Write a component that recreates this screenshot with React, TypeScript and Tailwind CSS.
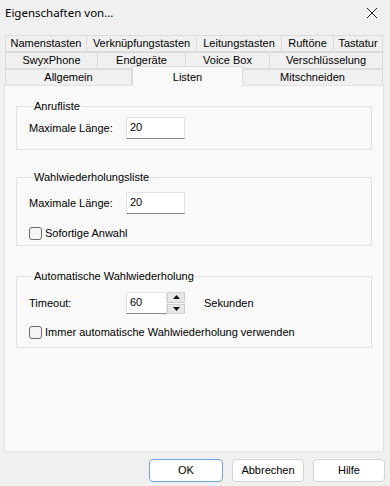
import React from "react";

const font = { fontFamily: '"Liberation Sans", Arial, sans-serif' };

function Tab({ label, w, selected }: { label: string; w: number; selected?: boolean }) {
  return (
    <div
      className={
        selected
          ? "relative z-10 -mt-[3px] flex h-[20px] items-start justify-center border border-b-0 border-[#dcdcdc] bg-[#f9f9f9] pt-[2px] text-[11px] text-black"
          : "flex h-[17px] items-center justify-center border border-[#dcdcdc] bg-[#f0f0f0] text-[11px] text-black -ml-px first:ml-0"
      }
      style={{ width: w }}
    >
      {label}
    </div>
  );
}

function TextBox({ value, w }: { value: string; w: number }) {
  return (
    <div
      className="h-[22px] border border-[#e3e3e3] border-b-[#8a8a8a] bg-white pl-[3px] pt-[3px] text-[11px] leading-[13px] text-black"
      style={{ width: w }}
    >
      {value}
    </div>
  );
}

function CheckBox({ label }: { label: string }) {
  return (
    <div className="flex items-center gap-[3px]">
      <div className="h-[13px] w-[13px] rounded-[3px] border border-[#6a6a6a] bg-[#f5f5f5]" />
      <span className="text-[11px] text-black">{label}</span>
    </div>
  );
}

function Group({ title, children, h }: { title: string; children: React.ReactNode; h: number }) {
  return (
    <fieldset
      className="relative mx-[11px] border border-[#e2e2e2] pl-[12px]"
      style={{ height: h }}
    >
      <legend className="ml-[4px] px-[1px] text-[11px] leading-[13px] text-black">{title}</legend>
      {children}
    </fieldset>
  );
}

function Button({ label, primary }: { label: string; primary?: boolean }) {
  return (
    <div
      className={
        "flex h-[23px] items-center justify-center rounded-[4px] border bg-white text-[11px] text-black " +
        (primary ? "border-[#6ea4d8]" : "border-[#d4d4d4]")
      }
      style={{ width: primary ? 74 : 72 }}
    >
      {label}
    </div>
  );
}

export default function App() {
  return (
    <div className="flex h-[486px] w-[390px] flex-col bg-[#f0f0f0]" style={font}>
      <div className="flex h-[25px] items-center justify-between pl-[5px] pr-[12px]">
        <span className="text-[11.5px] text-black" style={{ fontFamily: '"Noto Sans", "Open Sans", sans-serif' }}>
          Eigenschaften von...
        </span>
        <svg width="12" height="12" viewBox="0 0 12 12" className="mt-[1px]">
          <path d="M1 1 L11 11 M11 1 L1 11" stroke="#222" strokeWidth="1" fill="none" />
        </svg>
      </div>

      <div className="mt-[10px] flex flex-col pl-[5px]">
        <div className="flex">
          <Tab label="Namenstasten" w={82} />
          <Tab label="Verknüpfungstasten" w={111} />
          <Tab label="Leitungstasten" w={86} />
          <Tab label="Ruftöne" w={53} />
          <Tab label="Tastatur" w={50} />
        </div>
        <div className="flex">
          <Tab label="SwyxPhone" w={93} />
          <Tab label="Endgeräte" w={89} />
          <Tab label="Voice Box" w={85} />
          <Tab label="Verschlüsselung" w={114} />
        </div>
        <div className="flex items-end">
          <Tab label="Allgemein" w={127} />
          <Tab label="Listen" w={111} selected />
          <Tab label="Mitschneiden" w={141} />
        </div>
      </div>

      <div className="relative -mt-px ml-[4px] flex h-[367px] w-[380px] flex-col border border-[#e3e3e3] bg-[#f9f9f9] pt-[14px]">
        <Group title="Anrufliste" h={50}>
          <div className="mt-[4px] flex items-center">
            <span className="w-[97px] text-[11px] text-black">Maximale Länge:</span>
            <TextBox value="20" w={59} />
          </div>
        </Group>

        <div className="h-[21px]" />

        <Group title="Wahlwiederholungsliste" h={75}>
          <div className="mt-[8px] flex items-center">
            <span className="w-[97px] text-[11px] text-black">Maximale Länge:</span>
            <TextBox value="20" w={59} />
          </div>
          <div className="mt-[11px]">
            <CheckBox label="Sofortige Anwahl" />
          </div>
        </Group>

        <div className="h-[24px]" />

        <Group title="Automatische Wahlwiederholung" h={78}>
          <div className="mt-[9px] flex items-center">
            <span className="w-[97px] text-[11px] text-black">Timeout:</span>
            <TextBox value="60" w={41} />
            <div className="flex h-[22px] w-[18px] flex-col gap-px">
              <div className="flex flex-1 items-center justify-center border border-[#cfcfcf] bg-[#e8e8e8]">
                <svg width="7" height="4" viewBox="0 0 7 4">
                  <path d="M0 4 L3.5 0 L7 4 Z" fill="#111" />
                </svg>
              </div>
              <div className="flex flex-1 items-center justify-center border border-[#cfcfcf] bg-[#e8e8e8]">
                <svg width="7" height="4" viewBox="0 0 7 4">
                  <path d="M0 0 L3.5 4 L7 0 Z" fill="#111" />
                </svg>
              </div>
            </div>
            <span className="ml-[19px] text-[11px] text-black">Sekunden</span>
          </div>
          <div className="mt-[10px]">
            <CheckBox label="Immer automatische Wahlwiederholung verwenden" />
          </div>
        </Group>
      </div>

      <div className="mt-[7px] flex justify-end gap-[9px] pr-[5px]">
        <Button label="OK" primary />
        <Button label="Abbrechen" />
        <Button label="Hilfe" />
      </div>
    </div>
  );
}
